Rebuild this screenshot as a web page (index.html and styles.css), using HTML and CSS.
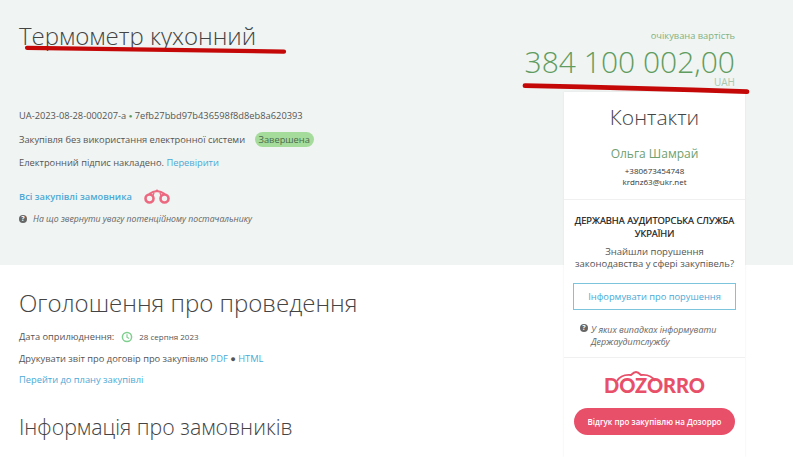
FILE: index.html
```html
<!DOCTYPE html>
<html lang="uk">
<head>
  <meta charset="UTF-8" />
  <title>Термометр кухонний</title>
  <link rel="stylesheet" href="styles.css">
</head>
<body>

  <div class="page">
    <section class="hero">
      <div class="hero-top">
        <h1>Термометр кухонний</h1>
        <div class="price">
          <div class="price-label">очікувана вартість</div>
          <div class="price-value">384 100 002,00</div>
          <div class="price-currency">UAH</div>
        </div>
      </div>

      <p class="ids">UA-2023-08-28-000207-a <span class="dot">●</span> 7efb27bbd97b436598f8d8eb8a620393</p>
      <p class="status-row">Закупівля без використання електронної системи <span class="badge">Завершена</span></p>
      <p class="sign-row">Електронний підпис накладено. <a href="#">Перевірити</a></p>
      <p class="buyer-row">
        <a href="#" class="buyer-link">Всі закупівлі замовника</a>
        <svg class="cuffs" width="28" height="15" viewBox="0 0 28 15">
          <circle cx="6.5" cy="9.5" r="4" fill="none" stroke="#ec6880" stroke-width="2.6"/>
          <circle cx="21.5" cy="9.5" r="4" fill="none" stroke="#ec6880" stroke-width="2.6"/>
          <path d="M6 5 Q10 2.5 14 2 Q18 2.5 22 5" fill="none" stroke="#ec6880" stroke-width="1.8"/>
          <path d="M9.5 7.5 L11 4 M18.5 7.5 L17 4" stroke="#ec6880" stroke-width="1.4"/>
          <circle cx="14" cy="1.8" r="1.2" fill="#ec6880"/>
        </svg>
      </p>
      <p class="hint"><span class="q">?</span><em>На що звернути увагу потенційному постачальнику</em></p>
    </section>

    <section class="content">
      <h2>Оголошення про проведення</h2>
      <p class="date-row">
        Дата оприлюднення:
        <svg class="clock" width="12" height="12" viewBox="0 0 12 12">
          <circle cx="6" cy="6" r="4.6" fill="none" stroke="#7fd08f" stroke-width="1.5"/>
          <path d="M6 3.2 V6.2 L8 7.4" fill="none" stroke="#7fd08f" stroke-width="1.2"/>
        </svg>
        <span class="date">28 серпня 2023</span>
      </p>
      <p class="print-row">Друкувати звіт про договір про закупівлю <a href="#">PDF</a> ● <a href="#">HTML</a></p>
      <p class="plan-row"><a href="#">Перейти до плану закупівлі</a></p>
      <h2 class="second">Інформація про замовників</h2>
    </section>

    <aside class="sidebar">
      <div class="contacts">
        <h3>Контакти</h3>
        <div class="contact-name">Ольга Шамрай</div>
        <div class="contact-line">+380673454748</div>
        <div class="contact-line">krdnz63@ukr.net</div>
      </div>
      <div class="audit">
        <div class="audit-title">ДЕРЖАВНА АУДИТОРСЬКА СЛУЖБА УКРАЇНИ</div>
        <div class="audit-text">Знайшли порушення законодавства у сфері закупівель?</div>
        <a href="#" class="btn-outline">Інформувати про порушення</a>
        <div class="audit-hint"><span class="q">?</span><em>У яких випадках інформувати Держаудитслужбу</em></div>
      </div>
      <div class="dozorro">
        <div class="logo">
          DOZORRO
          <svg class="logo-cuffs" width="56" height="12" viewBox="0 0 56 12">
            <path d="M9 11 Q13 4 23 5 Q26 2 28 2 Q30 2 33 5 Q43 4 47 11" fill="none" stroke="#e8506a" stroke-width="1.8"/>
          </svg>
        </div>
        <a href="#" class="btn-red">Відгук про закупівлю на Дозорро</a>
      </div>
    </aside>

    <svg class="marker" width="793" height="100" viewBox="0 0 793 100">
      <path d="M27 47.8 Q150 49.5 284 51.6" fill="none" stroke="#c40808" stroke-width="4.2" stroke-linecap="round"/>
      <path d="M525 85.7 Q640 88 747 91.7" fill="none" stroke="#c40808" stroke-width="4.8" stroke-linecap="round"/>
    </svg>
  </div>

</body>
</html>
```

FILE: styles.css
```css
body {
  font-family: "Open Sans", sans-serif;
  margin: 0;
  background-color: #fff;
  color: #555;
  font-size: 9.3px;
}

.page {
  position: relative;
  height: 457px;
  overflow: hidden;
}

a {
  color: #4ba9d6;
  text-decoration: none;
}

p {
  margin: 0;
}

/* Top band */
.hero {
  background-color: #f0f4f2;
  height: 265px;
  padding: 0 58px 0 19px;
  box-sizing: border-box;
}

.hero-top {
  display: flex;
  justify-content: space-between;
  height: 109px;
}

h1 {
  font-size: 24px;
  font-weight: 300;
  color: #444;
  margin: 0;
  padding-top: 19px;
  line-height: 33px;
}

.price {
  text-align: right;
  padding-top: 29px;
  color: #5f9c5f;
}

.price-label {
  font-size: 9.3px;
  line-height: 14px;
  color: #7fb27f;
}

.price-value {
  font-size: 30px;
  font-weight: 300;
  line-height: 30px;
  margin-top: 4px;
}

.price-currency {
  font-size: 10px;
  line-height: 10px;
  color: #a9c9ae;
}

.ids {
  line-height: 14px;
}

.dot {
  color: #5a9a5a;
  font-size: 6px;
  vertical-align: 1px;
}

.status-row {
  margin-top: 10px;
  line-height: 14px;
}

.badge {
  background-color: #a5dc9c;
  border-radius: 8px;
  padding: 1px 4px;
  margin-left: 7px;
  color: #4a6a4a;
}

.sign-row {
  margin-top: 9px;
  line-height: 14px;
}

.buyer-row {
  margin-top: 17px;
  height: 18px;
  display: flex;
  align-items: center;
  gap: 11px;
}

.buyer-link {
  font-weight: 600;
}

.hint {
  margin-top: 7px;
  line-height: 14px;
  display: flex;
  align-items: center;
  gap: 6px;
  color: #666;
  font-size: 8.7px;
}

.q {
  display: inline-block;
  flex: none;
  width: 8px;
  height: 8px;
  line-height: 8px;
  border-radius: 50%;
  background-color: #666;
  color: #fff;
  font-size: 7px;
  font-weight: 700;
  text-align: center;
}

/* Main content */
.content {
  padding: 0 19px;
}

h2 {
  font-size: 24px;
  font-weight: 300;
  color: #444;
  margin: 0;
  padding-top: 21px;
  line-height: 33px;
}

.date-row {
  margin-top: 11px;
  line-height: 14px;
  display: flex;
  align-items: center;
}

.clock {
  margin: 0 6px 0 7px;
}

.date {
  font-size: 8px;
}

.print-row {
  margin-top: 8px;
  line-height: 14px;
}

.plan-row {
  margin-top: 7px;
  line-height: 14px;
}

h2.second {
  font-size: 21.3px;
  padding-top: 23px;
}

/* Sidebar */
.sidebar {
  position: absolute;
  top: 92px;
  left: 564px;
  width: 181px;
  height: 365px;
  background-color: #fff;
  box-shadow: 0 0 2px rgba(0, 0, 0, 0.08);
  text-align: center;
}

.contacts {
  height: 108px;
  box-sizing: border-box;
  border-bottom: 1px solid #f0f0f0;
}

h3 {
  font-size: 21px;
  font-weight: 300;
  color: #444;
  margin: 0;
  padding-top: 11px;
  line-height: 29px;
}

.contact-name {
  font-size: 12px;
  color: #6fa06f;
  margin-top: 13px;
  line-height: 17px;
}

.contact-line {
  font-size: 8px;
  line-height: 11px;
  color: #333;
}

.contact-name + .contact-line {
  margin-top: 3px;
}

.audit {
  height: 158px;
  box-sizing: border-box;
  padding: 14px 9px 0;
  border-bottom: 1px solid #f0f0f0;
}

.audit-title {
  font-size: 9.4px;
  line-height: 13px;
  margin: 0 -3px;
  color: #111;
  -webkit-text-stroke: 0.2px #111;
}

.audit-text {
  font-size: 9.5px;
  line-height: 12px;
  margin-top: 6px;
}

.btn-outline {
  display: block;
  border: 1px solid #7cc4dc;
  height: 25px;
  line-height: 25px;
  margin-top: 13px;
  font-size: 9.3px;
}

.audit-hint {
  display: flex;
  gap: 3px;
  text-align: left;
  padding: 14px 0 0 7px;
  line-height: 12px;
  color: #666;
  font-size: 8.9px;
}

.dozorro {
  padding: 0 10px;
}

.logo {
  position: relative;
  font-family: "Lato", sans-serif;
  font-size: 20px;
  font-weight: 900;
  color: #e8506a;
  line-height: 22px;
  margin-top: 16px;
}

.logo-cuffs {
  position: absolute;
  top: -4px;
  left: 34px;
}

.btn-red {
  display: block;
  background-color: #e8506a;
  color: #fff;
  font-weight: 600;
  font-size: 8px;
  height: 27px;
  line-height: 27px;
  border-radius: 14px;
  margin-top: 12px;
}

.marker {
  position: absolute;
  top: 0;
  left: 0;
  pointer-events: none;
}
```
